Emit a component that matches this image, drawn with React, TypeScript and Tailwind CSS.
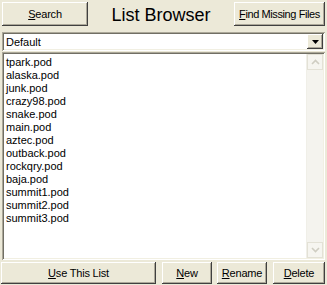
import React from "react";

const raised =
  "shadow-[inset_-1px_-1px_0_#404040,inset_1px_1px_0_#ffffff,inset_-2px_-2px_0_#aca899]";
const sunken =
  "shadow-[inset_1px_1px_0_#aca899,inset_-1px_-1px_0_#ffffff,inset_2px_2px_0_#716f64,inset_-2px_-2px_0_#f1efe2]";

function Btn({
  className,
  children,
}: {
  className: string;
  children: React.ReactNode;
}) {
  return (
    <div
      className={
        "flex items-center justify-center bg-[#ece9d8] text-[11px] leading-none tracking-[-0.2px] text-black pt-[1px] " +
        raised +
        " " +
        className
      }
    >
      {children}
    </div>
  );
}

const files = [
  "tpark.pod",
  "alaska.pod",
  "junk.pod",
  "crazy98.pod",
  "snake.pod",
  "main.pod",
  "aztec.pod",
  "outback.pod",
  "rockqry.pod",
  "baja.pod",
  "summit1.pod",
  "summit2.pod",
  "summit3.pod",
];

function ScrollArrow({ up }: { up: boolean }) {
  return (
    <div className="w-[16px] h-[16px] flex items-center justify-center border border-[#e3e1d6] bg-[#f6f5f0]">
      <svg width="9" height="6" viewBox="0 0 9 6">
        <path
          d={up ? "M1 5 L4.5 1.5 L8 5" : "M1 1 L4.5 4.5 L8 1"}
          fill="none"
          stroke="#cfcdc2"
          strokeWidth="1.6"
        />
      </svg>
    </div>
  );
}

export default function App() {
  return (
    <div className="w-[327px] h-[285px] bg-[#ece9d8] font-['Liberation_Sans',Arial,sans-serif] flex flex-col px-[2px] pt-[2px] overflow-hidden">
      <div className="flex items-center h-[24px]">
        <Btn className="w-[86px] h-[24px]">
          <span>
            <span className="underline">S</span>earch
          </span>
        </Btn>
        <div className="flex-1 text-center text-[18px] leading-none text-black pt-[2px]">
          List Browser
        </div>
        <Btn className="w-[91px] h-[24px] tracking-[-0.4px]">
          <span>
            <span className="underline">F</span>ind Missing Files
          </span>
        </Btn>
      </div>
      <div
        className={
          "mt-[6px] h-[19px] bg-white flex items-center p-[2px] " + sunken
        }
      >
        <div className="flex-1 text-[11px] leading-none pl-[2px] pt-[1px] text-black">
          Default
        </div>
        <div
          className={
            "w-[16px] h-[15px] bg-[#ece9d8] flex items-center justify-center " +
            raised
          }
        >
          <svg width="7" height="4" viewBox="0 0 7 4">
            <path d="M0 0 H7 L3.5 4 Z" fill="#000" />
          </svg>
        </div>
      </div>
      <div
        className={
          "mt-[1px] h-[208px] bg-white flex p-[2px] " + sunken
        }
      >
        <div className="flex-1 pl-[2px] pt-[2px] text-[11px] leading-[13px] text-black">
          {files.map((f) => (
            <div key={f}>{f}</div>
          ))}
        </div>
        <div className="w-[17px] flex flex-col bg-[#f4f3ee] border-l border-[#f0efe8]">
          <ScrollArrow up />
          <div className="flex-1" />
          <ScrollArrow up={false} />
        </div>
      </div>
      <div className="mt-[2px] flex h-[22px]">
        <Btn className="w-[155px] h-[22px] -ml-[1px]">
          <span>
            <span className="underline">U</span>se This List
          </span>
        </Btn>
        <Btn className="w-[50px] h-[22px] ml-[6px]">
          <span>
            <span className="underline">N</span>ew
          </span>
        </Btn>
        <Btn className="w-[50px] h-[22px] ml-[5px]">
          <span>
            <span className="underline">R</span>ename
          </span>
        </Btn>
        <Btn className="w-[52px] h-[22px] ml-[6px]">
          <span>
            <span className="underline">D</span>elete
          </span>
        </Btn>
      </div>
    </div>
  );
}
